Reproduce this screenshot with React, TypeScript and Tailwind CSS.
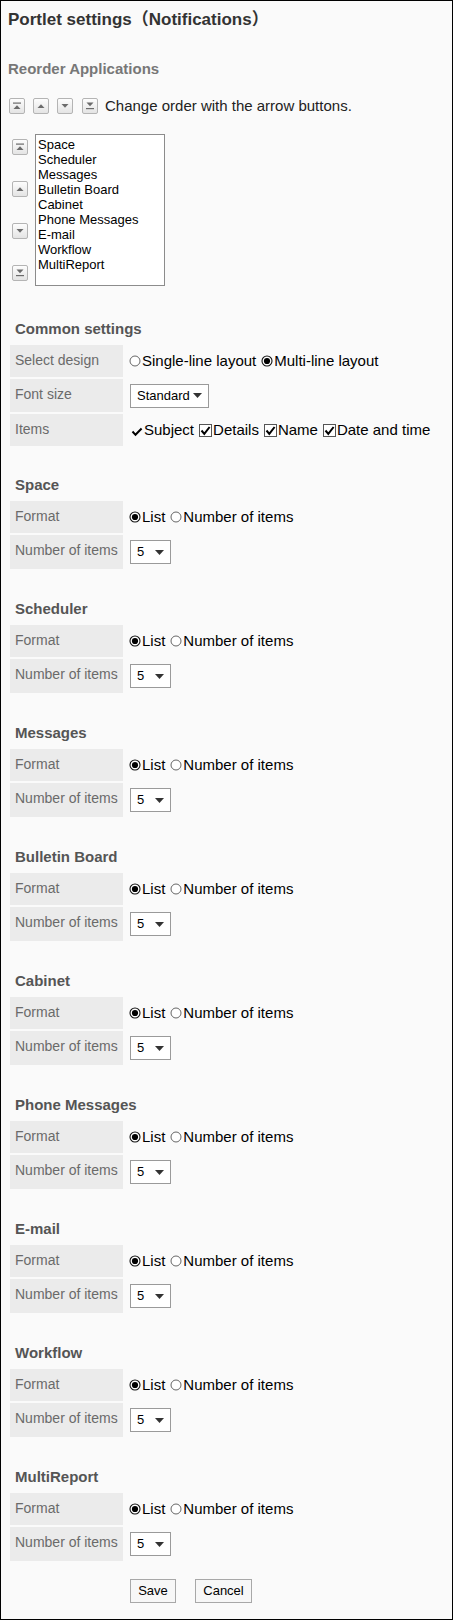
import React from "react";

const APPS = [
  "Space",
  "Scheduler",
  "Messages",
  "Bulletin Board",
  "Cabinet",
  "Phone Messages",
  "E-mail",
  "Workflow",
  "MultiReport",
];

type ArrowKind = "top" | "up" | "down" | "bottom";

function ArrowButton({ kind }: { kind: ArrowKind }) {
  return (
    <span className="flex h-[16px] w-[16px] shrink-0 items-center justify-center rounded-[2px] border border-[#b4b4b4] bg-gradient-to-b from-[#fdfdfd] to-[#e4e4e4]">
      <svg width="10" height="10" viewBox="0 0 10 10">
        {kind === "top" && (
          <>
            <rect x="1" y="1.5" width="8" height="1.2" fill="#6b6b6b" />
            <path d="M1.5 8 L5 4.2 L8.5 8 Z" fill="#6b6b6b" />
          </>
        )}
        {kind === "up" && <path d="M1.5 7 L5 3.2 L8.5 7 Z" fill="#6b6b6b" />}
        {kind === "down" && <path d="M1.5 3 L5 6.8 L8.5 3 Z" fill="#6b6b6b" />}
        {kind === "bottom" && (
          <>
            <path d="M1.5 1.5 L5 5.3 L8.5 1.5 Z" fill="#6b6b6b" />
            <rect x="1" y="7" width="8" height="1.2" fill="#6b6b6b" />
          </>
        )}
      </svg>
    </span>
  );
}

function Radio({ checked, label }: { checked?: boolean; label: string }) {
  return (
    <span className="inline-flex items-center">
      <svg width="12" height="12" viewBox="0 0 12 12" className="mr-[1px] shrink-0">
        {checked ? (
          <>
            <circle cx="6" cy="6" r="5" fill="white" stroke="#111" strokeWidth="1.1" />
            <circle cx="6" cy="6" r="3.1" fill="#000" />
          </>
        ) : (
          <circle cx="6" cy="6" r="5" fill="white" stroke="#666" strokeWidth="1" />
        )}
      </svg>
      {label}
    </span>
  );
}

function Check({ boxed, label }: { boxed?: boolean; label: string }) {
  return (
    <span className="inline-flex items-center">
      {boxed ? (
        <span className="mr-[1px] inline-flex h-[13px] w-[13px] shrink-0 items-center justify-center border border-[#555] bg-white">
          <svg width="11" height="11" viewBox="0 0 11 11">
            <path d="M1.5 5.5 L4.3 8.8 L9.6 2" fill="none" stroke="#000" strokeWidth="2" />
          </svg>
        </span>
      ) : (
        <svg width="12" height="11" viewBox="0 0 12 11" className="mr-[1px] mt-[3px] shrink-0">
          <path d="M1.5 5.5 L4.5 8.8 L10.6 2.5" fill="none" stroke="#000" strokeWidth="2" />
        </svg>
      )}
      {label}
    </span>
  );
}

function SelectBox({ value, className }: { value: string; className: string }) {
  return (
    <span
      className={`inline-flex h-[24px] items-center justify-between border border-[#9a9a9a] bg-white pl-[6px] pr-[6px] text-[13px] text-black ${className}`}
    >
      {value}
      <svg width="9" height="5" viewBox="0 0 9 5" className="shrink-0">
        <path d="M0 0 L9 0 L4.5 5 Z" fill="#333" />
      </svg>
    </span>
  );
}

function Row({ label, children, h }: { label: string; children: React.ReactNode; h: string }) {
  return (
    <>
      <div className={`bg-[#ebebeb] pl-[5px] pt-[7px] text-[14px] leading-[17px] text-[#6a6a6a] ${h}`}>
        {label}
      </div>
      <div className="flex items-center pl-[4px] text-[15px] text-black">{children}</div>
    </>
  );
}

function Heading({ children }: { children: React.ReactNode }) {
  return (
    <div className="mb-[7px] pl-[14px] text-[15px] font-bold leading-[18px] text-[#555]">{children}</div>
  );
}

function AppSection({ name, first }: { name: string; first: boolean }) {
  return (
    <div className={first ? "mt-[30px]" : "mt-[31px]"}>
      <Heading>{name}</Heading>
      <div className="ml-[9px] grid grid-cols-[113px_1fr] gap-x-[2px] gap-y-[2px]">
        <Row label="Format" h="h-[32px]">
          <Radio checked label="List" />
          <span className="w-[5px]" />
          <Radio label="Number of items" />
        </Row>
        <Row label="Number of items" h="h-[34px]">
          <span className="w-[1px]" />
          <SelectBox value="5" className="w-[41px]" />
        </Row>
      </div>
    </div>
  );
}

export default function App() {
  return (
    <div
      className="box-border h-[1620px] w-[453px] overflow-hidden border border-black bg-[#fafafa] text-black"
      style={{ fontFamily: '"Liberation Sans", Arial, "Noto Sans CJK JP", sans-serif' }}
    >
      <h1 className="mt-[9px] pl-[7px] text-[17px] font-bold leading-[20px] text-[#333]">
        Portlet settings（Notifications）
      </h1>

      <div className="mt-[30px] pl-[7px] text-[15px] font-bold leading-[18px] text-[#777]">
        Reorder Applications
      </div>

      <div className="mt-[20px] flex h-[16px] items-center pl-[8px]">
        <div className="flex items-center gap-[8px]">
          <ArrowButton kind="top" />
          <ArrowButton kind="up" />
          <ArrowButton kind="down" />
          <div className="ml-[1px] flex">
            <ArrowButton kind="bottom" />
          </div>
        </div>
        <span className="ml-[7px] text-[15px] text-[#222]">Change order with the arrow buttons.</span>
      </div>

      <div className="mt-[20px] flex pl-[11px]">
        <div className="flex flex-col gap-[26px] pt-[5px]">
          <ArrowButton kind="top" />
          <ArrowButton kind="up" />
          <ArrowButton kind="down" />
          <ArrowButton kind="bottom" />
        </div>
        <div className="ml-[7px] h-[152px] w-[130px] border border-[#8c8c8c] bg-white pl-[2px] pt-[2px] text-[13px] leading-[15px] text-black">
          {APPS.map((a) => (
            <div key={a}>{a}</div>
          ))}
        </div>
      </div>

      <div className="mt-[34px]">
        <Heading>Common settings</Heading>
        <div className="ml-[9px] grid grid-cols-[113px_1fr] gap-x-[2px] gap-y-[2px]">
          <Row label="Select design" h="h-[32px]">
            <Radio label="Single-line layout" />
            <span className="w-[5px]" />
            <Radio checked label="Multi-line layout" />
          </Row>
          <Row label="Font size" h="h-[33px]">
            <span className="w-[1px]" />
            <SelectBox value="Standard" className="w-[79px]" />
          </Row>
          <Row label="Items" h="h-[32px]">
            <span className="w-[2px]" />
            <Check label="Subject" />
            <span className="w-[5px]" />
            <Check boxed label="Details" />
            <span className="w-[5px]" />
            <Check boxed label="Name" />
            <span className="w-[5px]" />
            <Check boxed label="Date and time" />
          </Row>
        </div>
      </div>

      {APPS.map((a, i) => (
        <AppSection key={a} name={a} first={i === 0} />
      ))}

      <div className="mt-[18px] flex gap-[19px] pl-[129px]">
        <button className="h-[24px] w-[46px] border border-[#a8a8a8] bg-[#f7f7f7] text-[13px] text-black">
          Save
        </button>
        <button className="h-[24px] w-[57px] border border-[#a8a8a8] bg-[#f7f7f7] text-[13px] text-black">
          Cancel
        </button>
      </div>
    </div>
  );
}
